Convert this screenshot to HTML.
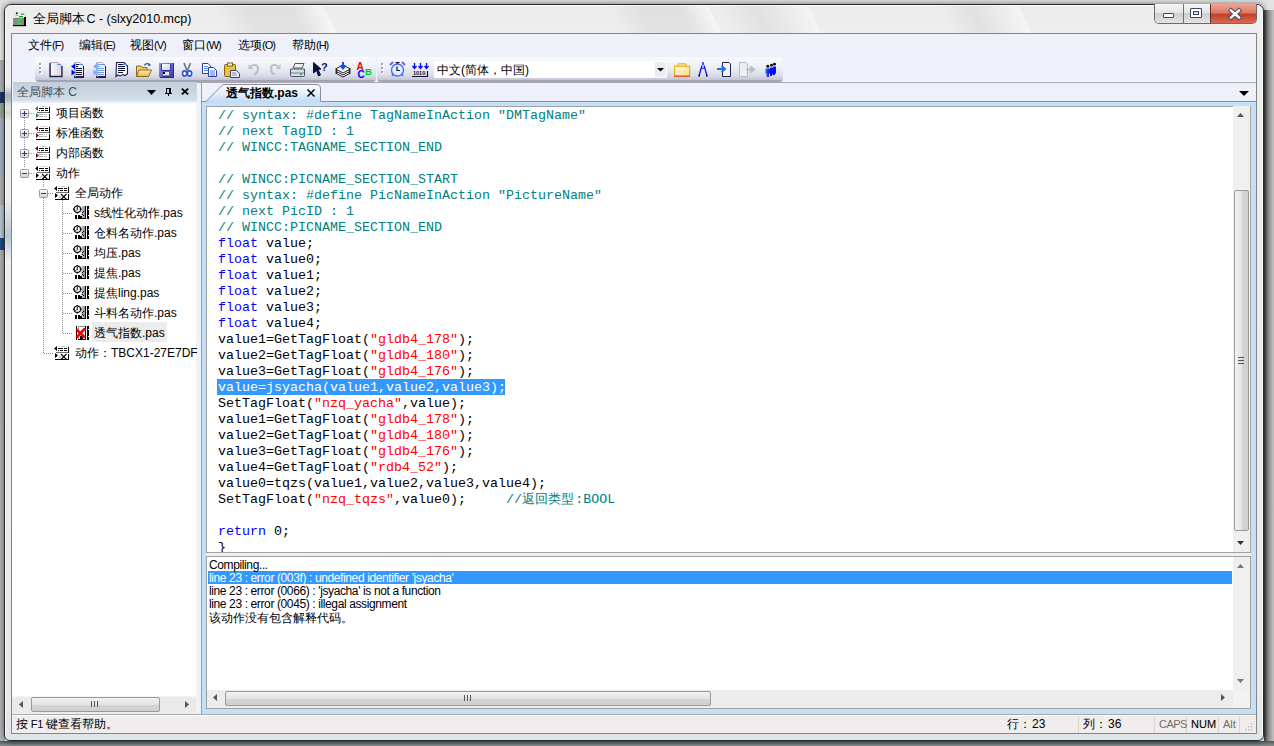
<!DOCTYPE html>
<html><head><meta charset="utf-8">
<style>
*{margin:0;padding:0;box-sizing:border-box}
html,body{width:1274px;height:746px;overflow:hidden;background:#e4e4e4;font-family:"Liberation Sans",sans-serif;font-size:12px;color:#000}
.a{position:absolute}
svg{position:absolute;overflow:visible}
#desk{left:0;top:0;width:1274px;height:746px;background:linear-gradient(#e2e2e2,#eeeeee 40px,#ececec)}
#win{left:4px;top:4px;width:1260px;height:737px;border:1px solid #2a2a2a;border-radius:7px 7px 6px 6px;background:linear-gradient(#ececec,#eeeeee 28px,#e9e9e9 700px,#dfe5e9 730px);box-shadow:0 0 6px rgba(0,0,0,.55),inset 0 1px 0 #fff,inset 1px 0 0 #fafafa,inset -1px 0 0 #fafafa}
#title{left:33px;top:11px;font-size:12.5px;color:#000;white-space:nowrap}
#client{left:11px;top:33px;width:1246px;height:701px;border:1px solid #858585;background:#eef0fa}
.mi{position:absolute;top:37px;font-size:12px;white-space:nowrap}.mi i{font-style:normal;font-size:11px;letter-spacing:-1px}
.tb{position:absolute;top:57px;height:25px;border-radius:3px 3px 4px 4px;background:linear-gradient(#fafafd,#eef0f7 40%,#d9dbe8 75%,#c2c4d6 92%,#a2a4b6 92%,#a2a4b6)}
.code{font-family:"Liberation Mono",monospace;font-size:13.33px;line-height:16px;white-space:pre}
.cm{color:#008080}.kw{color:#0000ff}.st{color:#ff0000}
.row{position:absolute;height:20px;line-height:20px;white-space:nowrap;font-size:12px}
.out{position:absolute;left:209px;font-size:12px;letter-spacing:-0.38px;white-space:nowrap;line-height:13px}
.sb{position:absolute;top:717px;font-size:12px;white-space:nowrap}
.cj{display:inline-block;white-space:nowrap}
</style></head><body>
<svg width="0" height="0" style="position:absolute">
<defs>
<symbol id="ifn" viewBox="0 0 16 15">
<g shape-rendering="crispEdges">
<rect x="5" y="0" width="1" height="1" fill="#d8d8d8"/><rect x="7" y="0" width="4" height="1" fill="#c8c8c8"/><rect x="12" y="0" width="1" height="1" fill="#d8d8d8"/><rect x="14" y="0" width="1" height="1" fill="#d8d8d8"/>
<rect x="4" y="2" width="5" height="1" fill="#000"/><rect x="10" y="2" width="3" height="1" fill="#000"/>
<rect x="4" y="4" width="1" height="1" fill="#000"/><rect x="6" y="4" width="3" height="1" fill="#000"/><rect x="10" y="4" width="3" height="1" fill="#000"/>
<rect x="2" y="6" width="13" height="1" fill="#707070"/>
<rect x="4" y="8" width="4" height="1" fill="#a8a8a8"/><rect x="9" y="8" width="1" height="1" fill="#b0b0b0"/><rect x="11" y="8" width="1" height="1" fill="#b0b0b0"/>
<rect x="4" y="10" width="4" height="1" fill="#a8a8a8"/><rect x="9" y="10" width="3" height="1" fill="#b0b0b0"/>
<rect x="14" y="1" width="1" height="6" fill="#000"/><rect x="14" y="8" width="1" height="6" fill="#000"/>
<rect x="1" y="13" width="14" height="1" fill="#000"/>
</g>
</symbol>
<symbol id="tri1" viewBox="0 0 16 15"><path d="M0 2.5 L3 0 V5Z M1 7 L4 9.5 L1 12Z" fill="#108080"/></symbol>
<symbol id="tri2" viewBox="0 0 16 15"><path d="M0 2.5 L3 0 V5Z M1 7 L4 9.5 L1 12Z" fill="#801010"/></symbol>
<symbol id="tri3" viewBox="0 0 16 15"><path d="M0 2.5 L3 0 V5Z M1 7 L4 9.5 L1 12Z" fill="#000"/></symbol>
<symbol id="iact" viewBox="0 0 16 15">
<g shape-rendering="crispEdges">
<rect x="5" y="0" width="1" height="1" fill="#d8d8d8"/><rect x="7" y="0" width="4" height="1" fill="#c8c8c8"/><rect x="12" y="0" width="1" height="1" fill="#d8d8d8"/><rect x="14" y="0" width="1" height="1" fill="#d8d8d8"/>
<rect x="4" y="2" width="5" height="1" fill="#000"/><rect x="10" y="2" width="3" height="1" fill="#000"/>
<rect x="4" y="4" width="1" height="1" fill="#000"/><rect x="6" y="4" width="3" height="1" fill="#000"/><rect x="10" y="4" width="3" height="1" fill="#000"/>
<rect x="2" y="6" width="13" height="1" fill="#707070"/>
<rect x="14" y="1" width="1" height="6" fill="#000"/><rect x="14" y="8" width="1" height="6" fill="#000"/>
<rect x="1" y="13" width="14" height="1" fill="#000"/>
</g>
<path d="M7 8 L12.5 13.5 M12.5 8 L7 13.5" stroke="#000" stroke-width="1.1"/>
<path d="M5 12 L8 9" stroke="#999" stroke-width="1.5" opacity="0.6"/>
</symbol>
<symbol id="ipas" viewBox="0 0 16 15">
<defs><linearGradient id="flm" x1="0" y1="0" x2="1" y2="0"><stop offset="0" stop-color="#f4f4f4"/><stop offset="1" stop-color="#8a8a8a"/></linearGradient></defs>
<rect x="7" y="1" width="5" height="13" fill="url(#flm)"/>
<g shape-rendering="crispEdges">
<rect x="12" y="1" width="1" height="13" fill="#000"/>
<rect x="14" y="1" width="2" height="13" fill="#000"/><rect x="15" y="4" width="1" height="1" fill="#fff"/><rect x="15" y="10" width="1" height="1" fill="#fff"/>
<rect x="2" y="10" width="2" height="4" fill="#000"/>
<rect x="5" y="13" width="8" height="1" fill="#000"/>
<rect x="5" y="10" width="2" height="4" fill="#000"/><rect x="7" y="11" width="2" height="2" fill="#000"/>
<rect x="9" y="7" width="1" height="1" fill="#000"/><rect x="10" y="6" width="1" height="1" fill="#000"/><rect x="9" y="9" width="1" height="1" fill="#000"/><rect x="10" y="10" width="1" height="1" fill="#000"/>
</g>
<g transform="translate(4.3,4.2)">
<circle r="3.2" fill="#fff" stroke="#000" stroke-width="1.1"/>
<g fill="#000"><rect x="-0.7" y="-4.4" width="1.4" height="1.3"/><rect x="-0.7" y="3.1" width="1.4" height="1.3"/><rect x="-4.4" y="-0.7" width="1.3" height="1.4"/><rect x="3.1" y="-0.7" width="1.3" height="1.4"/></g>
<path d="M0 -2.2 V0" stroke="#000" stroke-width="1"/><rect x="-0.7" y="-0.5" width="1.4" height="1.4" fill="#ff0000"/><rect x="-2" y="0.8" width="1" height="1" fill="#900000"/>
</g>
</symbol>
<symbol id="ibox" viewBox="0 0 9 9"><rect x="0.5" y="0.5" width="8" height="8" rx="1" fill="url(#bg9)" stroke="#9a9a9a"/></symbol>
<linearGradient id="bg9" x1="0" y1="0" x2="0" y2="1"><stop offset="0" stop-color="#fff"/><stop offset="1" stop-color="#d0d0d0"/></linearGradient>
</defs></svg>

<div id="desk" class="a"></div>
<div class="a" style="left:0;top:60px;width:5px;height:686px;background:#b4b6b8"></div>
<div class="a" style="left:0;top:92px;width:5px;height:11px;background:#1c3a6c"></div>
<div class="a" style="left:0;top:103px;width:5px;height:15px;background:#9aaa90"></div>
<div class="a" style="left:0;top:118px;width:5px;height:57px;background:#a8b8c8"></div>
<div class="a" style="left:0;top:205px;width:5px;height:35px;background:#c0ccd8"></div>
<div class="a" style="left:0;top:238px;width:4px;height:12px;background:#1a4a8a"></div>
<div class="a" style="left:0;top:741px;width:1274px;height:5px;background:linear-gradient(#4e5656,#8a9292)"></div>
<div class="a" style="left:1264px;top:10px;width:10px;height:731px;background:linear-gradient(90deg,#3a3a3a,#8a8a8a 40%,#c4c4c4)"></div>
<div id="win" class="a"></div>
<div class="a" style="left:5px;top:5px;width:1258px;height:28px;overflow:hidden;border-radius:6px 6px 0 0">
<div class="a" style="left:215px;top:-5px;width:110px;height:40px;transform:skewX(25deg);background:linear-gradient(90deg,rgba(0,0,0,0),rgba(0,0,0,.05) 30%,rgba(0,0,0,.05) 70%,rgba(255,255,255,.5))"></div>
<div class="a" style="left:610px;top:-5px;width:100px;height:40px;transform:skewX(25deg);background:linear-gradient(90deg,rgba(0,0,0,0),rgba(0,0,0,.05) 30%,rgba(0,0,0,.05) 70%,rgba(255,255,255,.5))"></div>
<div class="a" style="left:720px;top:-5px;width:90px;height:40px;transform:skewX(25deg);background:linear-gradient(90deg,rgba(0,0,0,0),rgba(0,0,0,.05) 40%,rgba(255,255,255,.4))"></div>
<div class="a" style="left:940px;top:-5px;width:80px;height:40px;transform:skewX(25deg);background:linear-gradient(90deg,rgba(0,0,0,0),rgba(0,0,0,.05) 40%,rgba(255,255,255,.4))"></div>
</div>
<div class="a" style="left:5px;top:86px;width:6px;height:22px;background:linear-gradient(rgba(40,70,120,0),rgba(40,70,120,.35) 40%,rgba(40,70,120,.3) 60%,rgba(40,70,120,0))"></div>
<div class="a" style="left:5px;top:104px;width:6px;height:18px;background:linear-gradient(rgba(110,150,90,0),rgba(110,150,90,.25) 50%,rgba(110,150,90,0))"></div>
<div class="a" style="left:5px;top:200px;width:6px;height:60px;background:linear-gradient(rgba(60,110,160,0),rgba(60,110,160,.3) 60%,rgba(60,110,160,0))"></div>
<!-- title icon -->
<svg style="left:12px;top:11px" width="16" height="16" viewBox="0 0 16 16">
<path d="M2.5 2.5 L5 1.5 L9 2.5 L13.5 3.5 L12.5 6.5 H4 Z" fill="#fff" stroke="#c8c8c8" stroke-width="0.8"/>
<rect x="4" y="1.5" width="1.5" height="1.5" fill="#000"/>
<path d="M4.5 4 L6 4.5 M7 5.5 H11 M9 3.5 L12 3" stroke="#00a000" stroke-width="1.2"/>
<rect x="1" y="7" width="11" height="7" fill="#888"/>
<rect x="12" y="6" width="2" height="9" fill="#000"/><rect x="1" y="14" width="13" height="1.2" fill="#000"/>
<path d="M9.5 8.7 H6.2 V12.6 H9.5" stroke="#00ff00" stroke-width="1.4" fill="none"/>
</svg>
<div id="title" class="a"><span class="cj" style="width:4em">全局脚本</span> C - (slxy2010.mcp)</div>
<!-- caption buttons -->
<div class="a" style="left:1154px;top:4px;width:103px;height:20px;border:1px solid #6b6b6b;border-top:none;border-radius:0 0 5px 5px;overflow:hidden">
 <div class="a" style="left:0;top:0;width:28px;height:19px;background:linear-gradient(#f6f6f6,#e6e6e6 45%,#cfcfcf 50%,#e2e2e2)"></div>
 <div class="a" style="left:28px;top:0;width:1px;height:19px;background:#707070"></div>
 <div class="a" style="left:29px;top:0;width:26px;height:19px;background:linear-gradient(#f6f6f6,#e6e6e6 45%,#cfcfcf 50%,#e2e2e2)"></div>
 <div class="a" style="left:55px;top:0;width:1px;height:19px;background:#5a3030"></div>
 <div class="a" style="left:56px;top:0;width:47px;height:19px;background:linear-gradient(#eea593,#dd7a63 45%,#c4402a 55%,#d66a50)"></div>
 <div class="a" style="left:8px;top:9px;width:11px;height:5px;border:1px solid #3b4660;border-radius:1px;background:#fff"></div>
 <div class="a" style="left:35px;top:4px;width:12px;height:10px;border:1px solid #3b4660;border-radius:1px;background:#fff"></div>
 <div class="a" style="left:38px;top:7px;width:6px;height:4px;border:1px solid #3b4660;background:#ddd"></div>
 <svg style="left:74px;top:5px" width="12" height="10" viewBox="0 0 12 10"><path d="M2 1.5 L10 8.5 M10 1.5 L2 8.5" stroke="#404058" stroke-width="4.4" stroke-linecap="square"/><path d="M2 1.5 L10 8.5 M10 1.5 L2 8.5" stroke="#fff" stroke-width="2.6" stroke-linecap="square"/></svg>
</div>
<div id="client" class="a"></div>
<!-- menu -->
<div class="mi" style="left:28px"><span class="cj" style="width:2em">文件</span><i>(F)</i></div>
<div class="mi" style="left:79px"><span class="cj" style="width:2em">编辑</span><i>(E)</i></div>
<div class="mi" style="left:130px"><span class="cj" style="width:2em">视图</span><i>(V)</i></div>
<div class="mi" style="left:182px"><span class="cj" style="width:2em">窗口</span><i>(W)</i></div>
<div class="mi" style="left:238px"><span class="cj" style="width:2em">选项</span><i>(O)</i></div>
<div class="mi" style="left:292px"><span class="cj" style="width:2em">帮助</span><i>(H)</i></div>
<!-- dock top line -->
<div class="a" style="left:783px;top:81px;width:473px;height:1px;background:#f8f8fc"></div><div class="a" style="left:35px;top:82px;width:1221px;height:1px;background:#a8a8b0"></div>
<!-- toolbars -->
<div class="tb" style="left:35px;width:341px"></div>
<div class="tb" style="left:377px;width:406px"></div>


<!-- toolbar icons -->
<div class="a" style="left:39px;top:63px;width:2px;height:2px;background:#a0a0a8;box-shadow:0 4px 0 #a0a0a8,0 8px 0 #a0a0a8,1px 1px 0 #fff,1px 5px 0 #fff,1px 9px 0 #fff"></div>
<div class="a" style="left:381px;top:63px;width:2px;height:2px;background:#a0a0a8;box-shadow:0 4px 0 #a0a0a8,0 8px 0 #a0a0a8,1px 1px 0 #fff,1px 5px 0 #fff,1px 9px 0 #fff"></div>
<svg style="left:0;top:0" width="1274" height="90" viewBox="0 0 1274 90">
<defs>
<linearGradient id="pg" x1="0" y1="0" x2="1" y2="0"><stop offset="0" stop-color="#fafafa"/><stop offset="1" stop-color="#d8d8d8"/></linearGradient>
<linearGradient id="fg" x1="0" y1="0" x2="0" y2="1"><stop offset="0" stop-color="#fff3c0"/><stop offset="1" stop-color="#f0b830"/></linearGradient>
</defs>
<!-- new doc -->
<g transform="translate(49,62)">
<path d="M1.5 0.5 H9 L12.5 4 V14.5 H1.5 Z" fill="url(#pg)" stroke="#a8a8b8"/>
<path d="M1 1 V14.5 H13 V4" stroke="#1e2050" stroke-width="1.3" fill="none"/>
<path d="M8 2.5 H12" stroke="#5a8ef0" stroke-width="1"/>
</g>
<!-- icon2 -->
<g transform="translate(71,62)">
<path d="M3.5 0.5 H9 L12.5 4 V14.5 H3.5 Z" fill="#f2f2f4" stroke="#b0b0c0"/>
<g shape-rendering="crispEdges">
<rect x="3" y="14" width="10" height="1.5" fill="#1e2050"/><rect x="12" y="4" width="1.3" height="11" fill="#1e2050"/><rect x="3.5" y="1" width="1" height="14" fill="#b0b0c0"/>
<rect x="5" y="2" width="3" height="1" fill="#101030"/><rect x="5" y="4" width="2" height="1" fill="#101030"/>
<rect x="5" y="6" width="6" height="1" fill="#101030"/><rect x="5" y="8" width="6" height="1" fill="#101030"/><rect x="5" y="10" width="6" height="1" fill="#101030"/><rect x="5" y="12" width="6" height="1" fill="#101030"/>
<rect x="8" y="2" width="4" height="1" fill="#5a8ef0"/>
</g>
<path d="M0 4.5 L4 1.5 V7.5 Z" fill="#0010f0"/><path d="M0.5 7.5 L4.5 10.5 L0.5 13.5Z" fill="#0010f0"/>
</g>
<!-- icon3 -->
<g transform="translate(93,62)">
<path d="M3.5 0.5 H9 L12.5 4 V14.5 H3.5 Z" fill="#f2f2f4" stroke="#b0b0c0"/>
<g shape-rendering="crispEdges">
<rect x="3" y="14" width="10" height="1.5" fill="#1e2050"/><rect x="12" y="4" width="1.3" height="11" fill="#1e2050"/><rect x="3.5" y="1" width="1" height="14" fill="#b0b0c0"/>
<rect x="5" y="2" width="3" height="1" fill="#70a0ff"/><rect x="5" y="4" width="2" height="1" fill="#70a0ff"/>
<rect x="5" y="6" width="6" height="1" fill="#6a9af8"/><rect x="5" y="8" width="6" height="1" fill="#6a9af8"/><rect x="5" y="10" width="6" height="1" fill="#6a9af8"/><rect x="5" y="12" width="6" height="1" fill="#6a9af8"/>
<rect x="8" y="2" width="4" height="1" fill="#5a8ef0"/>
</g>
<path d="M0 4.5 L4 1.5 V7.5 Z" fill="#78a8ff"/><path d="M0.5 7.5 L4.5 10.5 L0.5 13.5Z" fill="#78a8ff"/>
</g>
<!-- icon4 -->
<g transform="translate(115,62)">
<path d="M1.5 0.5 H9 L12.5 4 V12 L10 13.5 L8 12.5 L5 14 L3 13 L1 14.5 Z" fill="#f6f6f6" stroke="#1e2050" stroke-width="1.1"/>
<g shape-rendering="crispEdges">
<rect x="3" y="2" width="5" height="1" fill="#101030"/><rect x="3" y="4" width="7" height="1" fill="#101030"/><rect x="3" y="6" width="7" height="1" fill="#101030"/><rect x="3" y="8" width="7" height="1" fill="#101030"/><rect x="3" y="10" width="5" height="1" fill="#101030"/>
<rect x="8" y="2" width="4" height="1" fill="#5a8ef0"/>
</g>
</g>
<!-- folder open -->
<g transform="translate(136,63)">
<path d="M0.5 3 H5 L6 4.5 H11 V13.5 H0.5 Z" fill="#f5d070" stroke="#8a6a20"/>
<path d="M3 7 H15.5 L12.5 13.5 H0.5 Z" fill="url(#fg)" stroke="#8a6a20"/>
<path d="M8 2.5 Q11 -1 14 2" stroke="#405080" fill="none" stroke-width="1.1"/><path d="M13 0 L15 2.5 L12 3Z" fill="#405080"/>
</g>
<!-- save -->
<g transform="translate(159,63)">
<defs><linearGradient id="sv" x1="0" y1="0" x2="1" y2="1"><stop offset="0" stop-color="#9a98f0"/><stop offset="1" stop-color="#3c3aa8"/></linearGradient>
<linearGradient id="svl" x1="0" y1="0" x2="1" y2="1"><stop offset="0" stop-color="#ffffff"/><stop offset="1" stop-color="#c8d0e8"/></linearGradient></defs>
<rect x="0" y="0" width="14" height="14" fill="url(#sv)"/>
<path d="M0.5 14 H14 V0" stroke="#2a2880" fill="none" shape-rendering="crispEdges"/>
<rect x="3" y="1" width="8" height="6" fill="url(#svl)"/><path d="M2.5 1 V7.5 H11.5 V1" stroke="#3030a0" fill="none" shape-rendering="crispEdges"/>
<rect x="4" y="9" width="6" height="4" fill="#e8ecf4"/><rect x="4" y="9" width="2" height="2" fill="#000"/><path d="M4 13 H10" stroke="#202050"/>
</g>
<!-- cut -->
<g transform="translate(182,63)">
<path d="M2 0 L5 7.5 M8.5 0 L5.5 7.5" stroke="#6a7078" stroke-width="1.6"/>
<ellipse cx="2.6" cy="10.5" rx="2.1" ry="2.6" fill="#fff" stroke="#2c5ad0" stroke-width="1.6"/><ellipse cx="7.6" cy="10.5" rx="2.1" ry="2.6" fill="#fff" stroke="#2c5ad0" stroke-width="1.6"/>
</g>
<!-- copy -->
<g transform="translate(202,63)">
<path d="M0.5 0.5 H6 L8.5 3 V10.5 H0.5Z" fill="#fff" stroke="#2840a0"/>
<path d="M2 3.5 H6 M2 5.5 H6 M2 7.5 H6" stroke="#5080e0"/>
<path d="M6.5 4.5 H11.5 L14.5 7.5 V13.5 H6.5Z" fill="#fff" stroke="#2840a0"/>
<path d="M8 8 H13 M8 10 H13 M8 12 H13" stroke="#4070e0"/>
</g>
<!-- paste -->
<g transform="translate(224,63)">
<rect x="0.5" y="1.5" width="11" height="12" rx="1" fill="#f0c040" stroke="#806020"/>
<rect x="3.5" y="0" width="5" height="3" fill="#fff8d0" stroke="#806020"/>
<path d="M6.5 7.5 H12.5 L15.5 10.5 V14.5 H6.5Z" fill="#e8ecf4" stroke="#404858"/>
<path d="M8 10 H12 M8 12 H13" stroke="#8090b0"/>
</g>
<!-- undo -->
<g transform="translate(248,63)" opacity="0.9">
<path d="M3 3 Q10 0 10 6 Q10 10 6 11.5" stroke="#b8bcc8" stroke-width="2.2" fill="none"/><path d="M0.5 1 L5.5 6 L0.5 6Z" fill="#b8bcc8"/>
</g>
<g transform="translate(269,63)" opacity="0.9">
<path d="M9 3 Q2 0 2 6 Q2 10 6 11.5" stroke="#b8bcc8" stroke-width="2.2" fill="none"/><path d="M11.5 1 L6.5 6 L11.5 6Z" fill="#b8bcc8"/>
</g>
<!-- print -->
<g transform="translate(290,63)">
<path d="M3 5 L5 0.5 H14 L12 5Z" fill="#f0f0f0" stroke="#505868"/>
<path d="M0.5 6 H14.5 V12.5 Q14.5 13.5 13.5 13.5 H1.5 Q0.5 13.5 0.5 12.5Z" fill="#d8dce4" stroke="#505868"/>
<rect x="1" y="9" width="13" height="2" fill="#a8b0c0"/><rect x="10" y="10" width="2" height="2" fill="#20c020"/>
</g>
<!-- help cursor -->
<g transform="translate(313,62)">
<path d="M0.5 0.5 L8 7 L5 7.5 L7.5 13 L5.5 14 L3.5 8.5 L0.5 11Z" fill="#0a1040" stroke="#0a1040"/>
<text x="8" y="8.5" font-family="Liberation Sans" font-weight="bold" font-size="11" fill="#101860">?</text>
</g>
<!-- layers -->
<g transform="translate(335,62)">
<path d="M0.5 11 L8 7 L15.5 11 L8 15Z" fill="#fff" stroke="#202020"/>
<path d="M0.5 9 L8 5 L15.5 9 L8 13Z" fill="#fff" stroke="#202020"/>
<path d="M0.5 7 L8 3 L15.5 7 L8 11Z" fill="#f4f4f4" stroke="#202020"/>
<path d="M8 0 V6 M5.5 3.5 L8 6.5 L10.5 3.5" stroke="#1050e0" stroke-width="2" fill="none"/>
</g>
<!-- ABC -->
<text x="356.5" y="69.5" font-family="Liberation Sans" font-size="10" font-weight="bold" fill="#f00000">A</text>
<text x="357.5" y="77.5" font-family="Liberation Sans" font-size="10" font-weight="bold" fill="#0000f0">C</text>
<text x="365" y="74.5" font-family="Liberation Sans" font-size="9.5" font-weight="bold" fill="#00c800">B</text>
<!-- clock -->
<g transform="translate(390,62)">
<path d="M0 3 L3 0 M15 3 L12 0" stroke="#5070f0" stroke-width="2"/>
<circle cx="7.5" cy="8" r="6" fill="#e6eeff" stroke="#4a6af0" stroke-width="1.4"/>
<path d="M5.5 0.5 H9.5 M7.5 0.5 V2" stroke="#101030"/>
<path d="M7 4.5 V8.5 H10" stroke="#101030" stroke-width="1.2" fill="none"/>
<path d="M2 14 L3 12.5 M13 14 L12 12.5" stroke="#4a6af0" stroke-width="1.4"/>
</g>
<!-- 1010 -->
<g transform="translate(412,63)">
<path d="M2.5 0 V5 M0.5 3 L2.5 5.5 L4.5 3 M8.5 0 V5 M6.5 3 L8.5 5.5 L10.5 3 M14.5 0 V5 M12.5 3 L14.5 5.5 L16.5 3" stroke="#0010f0" stroke-width="1.3" fill="none"/>
<text x="1" y="12" font-family="Liberation Sans" font-weight="bold" font-size="5.5" fill="#101030">1010</text>
<path d="M0 13.5 H15.5 V8" stroke="#101030" fill="none" stroke-width="1.1"/>
</g>
<!-- combo -->
<rect x="434" y="61" width="233" height="17" fill="#fff"/>
<rect x="655" y="62" width="11" height="15" fill="#ecedf4"/>
<path d="M657 68 H664 L660.5 71.5Z" fill="#000"/>
<!-- folder closed -->
<g transform="translate(674,63)">
<defs><linearGradient id="fc" x1="0" y1="0" x2="1" y2="1"><stop offset="0" stop-color="#fffdf0"/><stop offset="1" stop-color="#f8d878"/></linearGradient></defs>
<path d="M3.5 3 L4.5 0.8 H11.5 L12.5 3" fill="#fff3c8" stroke="#e8b020" stroke-width="1.2"/>
<rect x="0.6" y="3.2" width="15" height="10" fill="url(#fc)" stroke="#e8b020" stroke-width="1.2"/>
<rect x="0" y="12.5" width="16" height="1.5" fill="#e06038"/>
</g>
<!-- compass -->
<g transform="translate(698,62)">
<path d="M5 0 V3" stroke="#1010e8" stroke-width="1.4"/>
<path d="M4 3.5 L3.2 6 L1 14 M6 3.5 L6.8 6 L9 14" stroke="#1010e8" stroke-width="1.3" fill="none"/>
<path d="M3.2 6 Q5 7 6.8 6" stroke="#1010e8" fill="none"/>
<rect x="0.5" y="13" width="1.5" height="1.5" fill="#000"/><rect x="8" y="13" width="1.5" height="1.5" fill="#000"/>
</g>
<!-- import -->
<g transform="translate(717,62)">
<path d="M5.5 0.5 H12 L13.5 2 V14.5 H5.5Z" fill="#f4f4f4" stroke="#1e2050"/>
<path d="M0 7 H7 M4.5 4 L8 7 L4.5 10" stroke="#2070f0" stroke-width="2" fill="none"/>
</g>
<!-- export grey -->
<g transform="translate(739,62)">
<path d="M0.5 0.5 H7 L8.5 2 V14.5 H0.5Z" fill="#eceef2" stroke="#b8bcc4"/>
<path d="M7 7.5 H14 M11 4.5 L15 7.5 L11 10.5" stroke="#b8bcc4" stroke-width="2" fill="none"/>
</g>
<!-- people -->
<g transform="translate(764,62)">
<defs><linearGradient id="pp" x1="0" y1="0" x2="1" y2="0"><stop offset="0" stop-color="#4060ff"/><stop offset="1" stop-color="#0010e0"/></linearGradient></defs>
<path d="M9 4.5 H12 V11.5 H11 V13 H9Z" fill="#0010f0"/><circle cx="10.5" cy="2.2" r="1.4" fill="#000"/>
<path d="M6 5.5 H9 V12.5 H8 V14 H6Z" fill="#0010f0"/><circle cx="7.5" cy="3.2" r="1.4" fill="#000"/>
<path d="M1.5 6.5 H6 V11.5 H5 V15 H2.5 V11.5 H1.5Z" fill="url(#pp)"/><circle cx="3.8" cy="4.2" r="1.5" fill="#000"/>
</g>
</svg>
<div class="a" style="left:437px;top:62px;font-size:12px;white-space:nowrap"><span class="cj" style="width:2em">中文</span>(<span class="cj" style="width:5em">简体，中国</span>)</div>
<!-- LEFT PANEL -->
<div class="a" style="left:13px;top:82px;width:184px;height:19px;background:linear-gradient(#c2ced9,#cbd7e2 60%,#d3dfe9)"></div>
<div class="a" style="left:12px;top:101px;width:185px;height:2px;background:#e8ebf8"></div>
<div class="a" style="left:17px;top:84px;font-size:12px;color:#484c54;white-space:nowrap"><span class="cj" style="width:4em">全局脚本</span> C</div>
<svg style="left:147px;top:90px" width="9" height="5" viewBox="0 0 9 5"><path d="M0 0 H9 L4.5 5 Z" fill="#000"/></svg>
<svg style="left:165px;top:88px" width="8" height="9" viewBox="0 0 8 9" shape-rendering="crispEdges"><rect x="1" y="0" width="5" height="1" fill="#000"/><rect x="1" y="0" width="1" height="5" fill="#000"/><rect x="4" y="0" width="2" height="5" fill="#000"/><rect x="0" y="5" width="7" height="1" fill="#000"/><rect x="3" y="6" width="1" height="2" fill="#000"/></svg>
<svg style="left:181px;top:88px" width="8" height="7" viewBox="0 0 8 7"><path d="M0.8 0.6 L7.2 6.4 M7.2 0.6 L0.8 6.4" stroke="#000" stroke-width="1.9"/></svg>
<div class="a" style="left:12px;top:103px;width:184px;height:593px;background:#fff"></div>

<svg style="left:12px;top:103px" width="185" height="260" viewBox="12 103 185 260">
<g stroke="#909090" stroke-dasharray="1 1" shape-rendering="crispEdges">
<path d="M24.5 118 V168"/>
<path d="M29 113.5 H35 M29 133.5 H35 M29 153.5 H35 M29 173.5 H35"/>
<path d="M43.5 178 V188 M43.5 198 V353"/>
<path d="M48 193.5 H54 M44 353.5 H54"/>
<path d="M62.5 200 V333"/>
<path d="M63 213.5 H73 M63 233.5 H73 M63 253.5 H73 M63 273.5 H73 M63 293.5 H73 M63 313.5 H73 M63 333.5 H73"/>
</g>
<use href="#ibox" x="20" y="109" width="9" height="9"/><use href="#ibox" x="20" y="129" width="9" height="9"/><use href="#ibox" x="20" y="149" width="9" height="9"/><use href="#ibox" x="20" y="169" width="9" height="9"/>
<use href="#ibox" x="39" y="189" width="9" height="9"/>
<path d="M22 113.5 H27 M24.5 111 V116 M22 133.5 H27 M24.5 131 V136 M22 153.5 H27 M24.5 151 V156 M22 173.5 H27 M41 193.5 H46" stroke="#1a3a8a" shape-rendering="crispEdges"/>
<g>
<use href="#ifn" x="35" y="106" width="16" height="15"/><use href="#tri1" x="35" y="106" width="16" height="15"/>
<use href="#ifn" x="35" y="126" width="16" height="15"/><use href="#tri2" x="35" y="126" width="16" height="15"/>
<use href="#ifn" x="35" y="146" width="16" height="15"/><use href="#tri2" x="35" y="146" width="16" height="15"/>
<use href="#iact" x="35" y="166" width="16" height="15"/><use href="#tri3" x="35" y="166" width="16" height="15"/>
<use href="#iact" x="54" y="186" width="16" height="15"/><use href="#tri3" x="54" y="186" width="16" height="15"/>
<use href="#iact" x="54" y="346" width="16" height="15"/><use href="#tri3" x="54" y="346" width="16" height="15"/>
<use href="#ipas" x="73" y="205" width="16" height="15"/>
<use href="#ipas" x="73" y="225" width="16" height="15"/>
<use href="#ipas" x="73" y="245" width="16" height="15"/>
<use href="#ipas" x="73" y="265" width="16" height="15"/>
<use href="#ipas" x="73" y="285" width="16" height="15"/>
<use href="#ipas" x="73" y="305" width="16" height="15"/>
<g shape-rendering="crispEdges">
<rect x="78" y="326" width="7" height="13" fill="#fff"/><rect x="78" y="326" width="7" height="1" fill="#888"/><rect x="78" y="326" width="1" height="13" fill="#aaa"/>
<rect x="76" y="326" width="1" height="14" fill="#000"/><rect x="85" y="326" width="1" height="14" fill="#000"/><rect x="78" y="339" width="7" height="1" fill="#000"/>
<rect x="87" y="326" width="2" height="14" fill="#000"/><rect x="88" y="329" width="1" height="1" fill="#fff"/><rect x="88" y="336" width="1" height="1" fill="#fff"/>
<rect x="80" y="336" width="3" height="3" fill="#000"/>
</g>
<path d="M76.5 329.5 L85 337.5 M85 328.5 L76.5 337.5" stroke="#ff0000" stroke-width="2.6"/>
</g>
</svg>
<div class="a" style="left:92px;top:322px;width:75px;height:20px;background:#ececec"></div>
<div class="row" style="left:56px;top:103px"><span class="cj" style="width:4em">项目函数</span></div>
<div class="row" style="left:56px;top:123px"><span class="cj" style="width:4em">标准函数</span></div>
<div class="row" style="left:56px;top:143px"><span class="cj" style="width:4em">内部函数</span></div>
<div class="row" style="left:56px;top:163px"><span class="cj" style="width:2em">动作</span></div>
<div class="row" style="left:75px;top:183px"><span class="cj" style="width:4em">全局动作</span></div>
<div class="row" style="left:94px;top:203px">s<span class="cj" style="width:5em">线性化动作</span>.pas</div>
<div class="row" style="left:94px;top:223px"><span class="cj" style="width:5em">仓料名动作</span>.pas</div>
<div class="row" style="left:94px;top:243px"><span class="cj" style="width:2em">均压</span>.pas</div>
<div class="row" style="left:94px;top:263px"><span class="cj" style="width:2em">提焦</span>.pas</div>
<div class="row" style="left:94px;top:283px"><span class="cj" style="width:2em">提焦</span>ling.pas</div>
<div class="row" style="left:94px;top:303px"><span class="cj" style="width:5em">斗料名动作</span>.pas</div>
<div class="row" style="left:94px;top:323px"><span class="cj" style="width:4em">透气指数</span>.pas</div>
<div class="row" style="left:75px;top:343px;width:122px;overflow:hidden"><span class="cj" style="width:3em">动作：</span>TBCX1-27E7DF</div>

<!-- left hscroll -->
<div class="a" style="left:12px;top:696px;width:184px;height:17px;background:#eaeaea;border-top:1px solid #f4f4f4"></div>
<svg style="left:19px;top:701px" width="4" height="7" viewBox="0 0 4 7"><path d="M4 0 V7 L0 3.5Z" fill="#555"/></svg>
<svg style="left:185px;top:701px" width="4" height="7" viewBox="0 0 4 7"><path d="M0 0 V7 L4 3.5Z" fill="#555"/></svg>
<div class="a" style="left:31px;top:697px;width:129px;height:15px;border:1px solid #9a9a9a;border-radius:2px;background:linear-gradient(#f3f3f3,#e2e2e2 50%,#d4d4d4 55%,#cfcfcf)"></div>
<svg style="left:91px;top:701px" width="7" height="6" viewBox="0 0 7 6"><path d="M0.5 0 V6 M3.5 0 V6 M6.5 0 V6" stroke="#555"/></svg>
<!-- splitter line -->
<div class="a" style="left:201px;top:82px;width:1px;height:632px;background:#9a9aa8"></div>
<!-- tab strip -->
<div class="a" style="left:202px;top:101px;width:1054px;height:1px;background:#8c8c9c"></div>
<svg style="left:203px;top:84px" width="120" height="19" viewBox="0 0 120 19">
<defs><linearGradient id="tg" x1="0" y1="0" x2="0" y2="1"><stop offset="0" stop-color="#fdfeff"/><stop offset="0.5" stop-color="#e4f0fc"/><stop offset="1" stop-color="#c0dcf6"/></linearGradient></defs>
<path d="M3 17.5 L20 0.5 H114 Q117.5 0.5 117.5 4 V18 Z" fill="url(#tg)" stroke="#8c8c9c" stroke-width="1"/>
<rect x="3.5" y="17" width="114" height="2" fill="#c0dcf4"/>
</svg>
<div class="a" style="left:226px;top:85px;font-size:12px;font-weight:bold;white-space:nowrap"><span class="cj" style="width:4em">透气指数</span>.pas</div>
<svg style="left:307px;top:89px" width="8" height="8" viewBox="0 0 8 8"><path d="M0.5 0.5 L7.5 7.5 M7.5 0.5 L0.5 7.5" stroke="#000" stroke-width="1.5"/></svg>
<svg style="left:1239px;top:91px" width="10" height="5" viewBox="0 0 10 5"><path d="M0 0 H10 L5 5 Z" fill="#000"/></svg>
<!-- editor frame -->
<div class="a" style="left:202px;top:102px;width:1054px;height:612px;background:#c4dff8"></div>
<div class="a" style="left:206px;top:106px;width:1045px;height:447px;border:1px solid #a0a0a0;border-right-color:#a8a8a8;background:#fff"></div>
<div class="a" style="left:206px;top:553px;width:1045px;height:4px;background:#f0f0f0"></div>
<div class="a" style="left:206px;top:556px;width:1045px;height:153px;border:1px solid #a0a0a0;background:#fff"></div>
<!-- code vscroll -->
<div class="a" style="left:1233px;top:106px;width:17px;height:446px;background:#efefef"></div>
<svg style="left:1237px;top:113px" width="7" height="4" viewBox="0 0 7 4"><path d="M0 4 H7 L3.5 0Z" fill="#555"/></svg>
<svg style="left:1237px;top:541px" width="7" height="4" viewBox="0 0 7 4"><path d="M0 0 H7 L3.5 4Z" fill="#333"/></svg>
<div class="a" style="left:1234px;top:190px;width:15px;height:341px;border:1px solid #9a9a9a;border-radius:2px;background:linear-gradient(90deg,#f4f4f4,#e4e4e4 50%,#d6d6d6 55%,#d0d0d0)"></div>
<svg style="left:1238px;top:357px" width="6" height="7" viewBox="0 0 6 7"><path d="M0 0.5 H6 M0 3.5 H6 M0 6.5 H6" stroke="#555"/></svg>
<!-- code -->
<div class="a" style="left:217px;top:379px;width:288px;height:16px;background:#3399ff"></div>
<div class="a" style="left:207px;top:107px;width:1026px;height:445px;overflow:hidden"><div class="a code" id="code" style="left:11px;top:1px"><span class="cm">// syntax: #define TagNameInAction "DMTagName"</span>
<span class="cm">// next TagID : 1</span>
<span class="cm">// WINCC:TAGNAME_SECTION_END</span>

<span class="cm">// WINCC:PICNAME_SECTION_START</span>
<span class="cm">// syntax: #define PicNameInAction "PictureName"</span>
<span class="cm">// next PicID : 1</span>
<span class="cm">// WINCC:PICNAME_SECTION_END</span>
<span class="kw">float</span> value;
<span class="kw">float</span> value0;
<span class="kw">float</span> value1;
<span class="kw">float</span> value2;
<span class="kw">float</span> value3;
<span class="kw">float</span> value4;
value1=GetTagFloat(<span class="st">"gldb4_178"</span>);
value2=GetTagFloat(<span class="st">"gldb4_180"</span>);
value3=GetTagFloat(<span class="st">"gldb4_176"</span>);
<span style="color:#fff">value=jsyacha(value1,value2,value3);</span>
SetTagFloat(<span class="st">"nzq_yacha"</span>,value);
value1=GetTagFloat(<span class="st">"gldb4_178"</span>);
value2=GetTagFloat(<span class="st">"gldb4_180"</span>);
value3=GetTagFloat(<span class="st">"gldb4_176"</span>);
value4=GetTagFloat(<span class="st">"rdb4_52"</span>);
value0=tqzs(value1,value2,value3,value4);
SetTagFloat(<span class="st">"nzq_tqzs"</span>,value0);     <span class="cm">//<span class="cj" style="width:4em">返回类型</span>:BOOL</span>

<span class="kw">return</span> 0;
}</div></div>
<!-- output -->
<div class="a" style="left:208px;top:571px;width:1024px;height:13px;background:#3399ff"></div>
<div class="out" style="top:559px">Compiling...</div>
<div class="out" style="top:572px;color:#fff">line 23 : error (003f) : undefined identifier 'jsyacha'</div>
<div class="out" style="top:585px">line 23 : error (0066) : 'jsyacha' is not a function</div>
<div class="out" style="top:598px">line 23 : error (0045) : illegal assignment</div>
<div class="out" style="top:611px;font-size:12px;letter-spacing:0;line-height:14px"><span class="cj" style="width:12em">该动作没有包含解释代码。</span></div>
<!-- output vscroll -->
<div class="a" style="left:1233px;top:557px;width:17px;height:133px;background:#efefef"></div>
<svg style="left:1237px;top:564px" width="7" height="4" viewBox="0 0 7 4"><path d="M0 4 H7 L3.5 0Z" fill="#777"/></svg>
<svg style="left:1237px;top:679px" width="7" height="4" viewBox="0 0 7 4"><path d="M0 0 H7 L3.5 4Z" fill="#777"/></svg>
<!-- output hscroll -->
<div class="a" style="left:207px;top:690px;width:1026px;height:18px;background:#ececec"></div>
<div class="a" style="left:1233px;top:690px;width:17px;height:18px;background:#f2f2f2"></div>
<svg style="left:213px;top:694px" width="4" height="7" viewBox="0 0 4 7"><path d="M4 0 V7 L0 3.5Z" fill="#555"/></svg>
<svg style="left:1221px;top:694px" width="4" height="7" viewBox="0 0 4 7"><path d="M0 0 V7 L4 3.5Z" fill="#555"/></svg>
<div class="a" style="left:225px;top:691px;width:486px;height:15px;border:1px solid #9a9a9a;border-radius:2px;background:linear-gradient(#f3f3f3,#e2e2e2 50%,#d4d4d4 55%,#cfcfcf)"></div>
<svg style="left:464px;top:695px" width="7" height="6" viewBox="0 0 7 6"><path d="M0.5 0 V6 M3.5 0 V6 M6.5 0 V6" stroke="#555"/></svg>
<!-- status bar -->
<div class="a" style="left:12px;top:714px;width:1244px;height:19px;background:#f0edec;border-top:1px solid #a8a8a8;box-shadow:inset 0 1px 0 #fff"></div>
<div class="sb" style="left:16px;top:716px"><span class="cj" style="width:1em">按</span><span style="font-size:11px;letter-spacing:-0.3px"> F1 </span><span class="cj" style="width:6em">键查看帮助。</span></div>
<div class="a" style="left:1078px;top:716px;width:1px;height:17px;background:#d8d4d0"></div>
<div class="a" style="left:1154px;top:716px;width:1px;height:17px;background:#d8d4d0"></div>
<div class="a" style="left:1186px;top:716px;width:1px;height:17px;background:#d8d4d0"></div>
<div class="a" style="left:1218px;top:716px;width:1px;height:17px;background:#d8d4d0"></div>
<div class="a" style="left:1239px;top:716px;width:1px;height:17px;background:#d8d4d0"></div>
<div class="sb" style="left:1007px;top:716px"><span class="cj" style="width:2em">行：</span><span style="margin-left:1px">23</span></div>
<div class="sb" style="left:1083px;top:716px"><span class="cj" style="width:2em">列：</span><span style="margin-left:1px">36</span></div>
<div class="sb" style="left:1159px;top:718px;font-size:11px;letter-spacing:-0.5px;color:#6d6d6d">CAPS</div>
<div class="sb" style="left:1191px;top:718px;font-size:11px;color:#000;-webkit-text-stroke:0.1px #000">NUM</div>
<div class="sb" style="left:1223px;top:718px;font-size:11px;color:#6d6d6d">Alt</div>
<svg style="left:1244px;top:722px" width="10" height="10" viewBox="0 0 10 10"><g fill="#b8b4b0"><rect x="7" y="1" width="1.3" height="1.3"/><rect x="4" y="4" width="1.3" height="1.3"/><rect x="7" y="4" width="1.3" height="1.3"/><rect x="1" y="7" width="1.3" height="1.3"/><rect x="4" y="7" width="1.3" height="1.3"/><rect x="7" y="7" width="1.3" height="1.3"/></g></svg>
</body></html>
